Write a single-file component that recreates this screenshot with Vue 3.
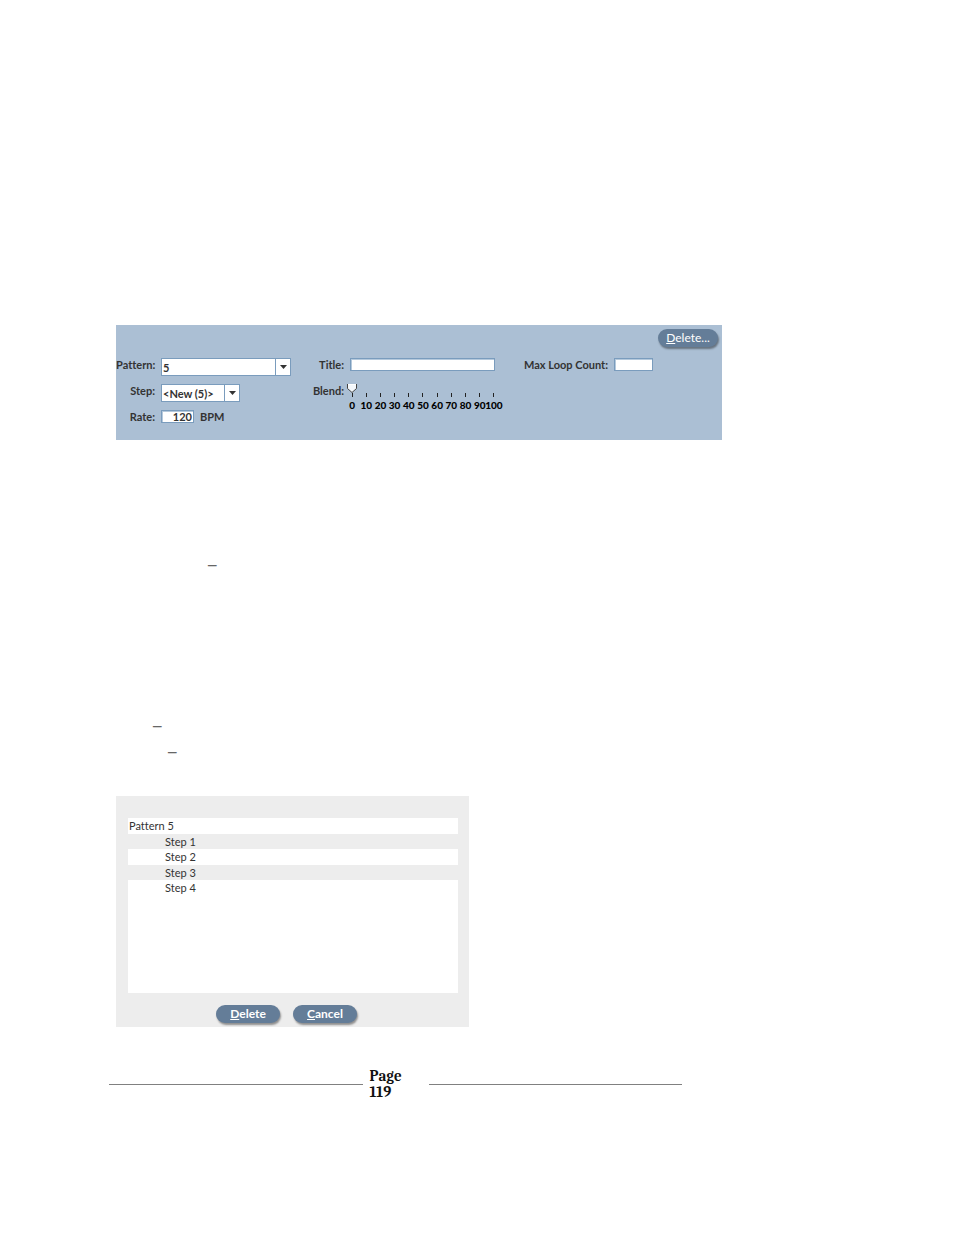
<template>
  <main class="page">
    <form class="editor" @submit.prevent>
      <div class="editor__toolbar">
        <button type="button" class="btn btn--small"><u>D</u>elete...</button>
      </div>
      <div class="editor__grid">
        <label for="pattern">Pattern:</label>
        <div class="combo">
          <select id="pattern" v-model="pattern">
            <option>5</option>
          </select>
          <span class="combo__arrow"><svg viewBox="0 0 7 4"><path d="M0 0h7L3.5 4z" /></svg></span>
        </div>
        <label for="title">Title:</label>
        <input id="title" v-model="title" type="text" class="field" />
        <label for="loops">Max Loop Count:</label>
        <input id="loops" v-model="loops" type="text" class="field field--loops" />

        <label for="step">Step:</label>
        <div class="combo combo--step">
          <select id="step" v-model="step">
            <option>&lt;New (5)&gt;</option>
          </select>
          <span class="combo__arrow"><svg viewBox="0 0 7 4"><path d="M0 0h7L3.5 4z" /></svg></span>
        </div>
        <label for="blend">Blend:</label>
        <div class="slider">
          <input id="blend" v-model="blend" type="range" min="0" max="100" />
          <div class="slider__scale">
            <span v-for="n in ticks" :key="n" class="slider__tick">{{ n }}</span>
          </div>
        </div>

        <label for="rate" class="editor__rate-label">Rate:</label>
        <div class="rate">
          <input id="rate" v-model="rate" type="text" class="field field--rate" />
          <span>BPM</span>
        </div>
      </div>
    </form>

    <section class="notes">
      <p class="notes__first">–</p>
      <p class="notes__second">–</p>
      <p class="notes__third">–</p>
    </section>

    <section class="dialog">
      <ul class="dialog__list">
        <li class="dialog__row">Pattern 5</li>
        <li v-for="n in 4" :key="n" class="dialog__row dialog__row--step">Step {{ n }}</li>
      </ul>
      <div class="dialog__actions">
        <button type="button" class="btn"><u>D</u>elete</button>
        <button type="button" class="btn"><u>C</u>ancel</button>
      </div>
    </section>

    <footer class="footer">
      <span class="footer__rule"></span>
      <strong class="footer__page">Page 119</strong>
      <span class="footer__rule"></span>
    </footer>
  </main>
</template>

<script setup>
import { ref } from 'vue';

const pattern = ref('5');
const step = ref('<New (5)>');
const title = ref('');
const loops = ref('');
const rate = ref('120');
const blend = ref(0);

const ticks = Array.from({ length: 11 }, (_, i) => i * 10);
</script>

<style>
body {
  margin: 0;
  background: #fff;
}
</style>

<style scoped>
.page {
  padding: 325px 232px 130px 116px;
  font-family: 'Century Gothic', Lato, sans-serif;
  font-size: 11px;
  font-variant-ligatures: none;
  color: #333;
}

.editor {
  background: #abbfd4;
  padding: 4px 4px 17px 0;
  font-weight: 700;
  line-height: 13px;
}

.editor__toolbar {
  display: flex;
  justify-content: flex-end;
  margin-bottom: 11px;
}

.editor__grid {
  display: grid;
  grid-template-columns: 39px 131fr 47px 150fr 101px 39px;
  column-gap: 6px;
  row-gap: 8px;
  align-items: start;
  padding-right: 65px;
}

.editor__grid label {
  text-align: right;
  white-space: nowrap;
}

.editor__rate-label {
  grid-column: 1;
  grid-row: 3;
}

.combo {
  display: grid;
  grid-template-columns: 1fr 15px;
  box-sizing: border-box;
  height: 18px;
  border: 1px solid #7a9cbd;
  background: #fff;
}

.combo--step {
  width: 79px;
}

.combo select {
  grid-area: 1 / 1 / 2 / 3;
  appearance: none;
  border: 0;
  padding: 0 1px;
  margin: 0;
  background: transparent;
  font: inherit;
  color: #333;
}

.combo__arrow {
  grid-area: 1 / 2;
  display: flex;
  align-items: center;
  justify-content: center;
  border-left: 1px solid #7a9cbd;
  pointer-events: none;
}

.combo__arrow svg {
  width: 7px;
  height: 4px;
  fill: #333;
}

.field {
  box-sizing: border-box;
  width: 145px;
  height: 13px;
  border: 1px solid #7a9cbd;
  border-radius: 0;
  padding: 0 1px;
  margin: 0;
  background: #fff;
  box-shadow: inset 1px 1px 0 #b5c9dc;
  font: inherit;
  line-height: 11px;
  color: #333;
}

.field--loops {
  width: 39px;
}

.field--rate {
  width: 33px;
  text-align: right;
}

.rate {
  grid-column: 2;
  grid-row: 3;
  display: flex;
  gap: 6px;
}

.slider {
  grid-row: 2 / 4;
  grid-column: 4;
  width: 156px;
  margin-left: -5px;
}

.slider input {
  appearance: none;
  display: block;
  width: 152px;
  height: 9px;
  margin: 0 2px;
  background: transparent;
}

.slider input::-webkit-slider-thumb {
  appearance: none;
  width: 10px;
  height: 9px;
  background: url("data:image/svg+xml,%3Csvg xmlns='http://www.w3.org/2000/svg' viewBox='0 0 10 9'%3E%3Cpath d='M.5 0V4.500L5 8.500 9.500 4.500V0z' fill='%23f4f8fc' stroke='%23444'/%3E%3Cpath d='M1 0H9V1H1z' fill='%23fff'/%3E%3C/svg%3E") no-repeat;
}

.slider__scale {
  display: grid;
  grid-template-columns: repeat(11, 1fr);
  font-size: 10px;
  font-weight: 900;
}

.slider__tick {
  display: flex;
  flex-direction: column;
  align-items: center;
  gap: 2px;
  min-width: 0;
  color: #000;
}

.slider__tick::before {
  content: '';
  width: 1px;
  height: 4px;
  background: #222;
}

.btn {
  width: 64px;
  height: 18px;
  padding: 0;
  border: 0;
  border-radius: 9px;
  background: #647d98;
  box-shadow: 1px 2px 2px rgba(0, 0, 0, 0.4);
  font: inherit;
  font-size: 12px;
  font-weight: 700;
  line-height: 18px;
  color: #fff;
}

.btn--small {
  width: 60px;
  font-weight: 400;
}

.notes {
  padding-top: 115px;
  font-family: 'Liberation Serif', serif;
  font-size: 17px;
  font-weight: 700;
  line-height: 20px;
  color: #666;
}

.notes p {
  margin: 0;
}

.notes__first {
  padding-left: 92px;
}

.notes .notes__second {
  margin-top: 141px;
  padding-left: 37px;
}

.notes .notes__third {
  margin-top: 6px;
  padding-left: 52px;
}

.dialog {
  box-sizing: border-box;
  max-width: 353px;
  margin-top: 34px;
  padding: 22px 11px 4px 12px;
  background: #ededed;
}

.dialog__list {
  list-style: none;
  min-height: 175px;
  margin: 0;
  padding: 0;
  background: #fff;
  font-size: 11px;
}

.dialog__row {
  height: 16px;
  padding-left: 1px;
  line-height: 16px;
}

.dialog__row:nth-child(even) {
  height: 15px;
  background: #ededed;
}

.dialog__row--step {
  padding-left: 37px;
}

.dialog__actions {
  display: flex;
  justify-content: center;
  gap: 13px;
  padding-top: 12px;
  padding-right: 13px;
}

.footer {
  display: flex;
  align-items: center;
  margin: 41px 40px 0 -7px;
}

.footer__rule {
  flex: 1;
  height: 1px;
  background: #808080;
}

.footer__page {
  box-sizing: border-box;
  width: 66px;
  padding: 0 24px 0 7px;
  font-family: Cambria, 'Liberation Serif', serif;
  font-size: 15px;
  font-kerning: none;
  line-height: 16px;
  color: #111;
}
</style>
